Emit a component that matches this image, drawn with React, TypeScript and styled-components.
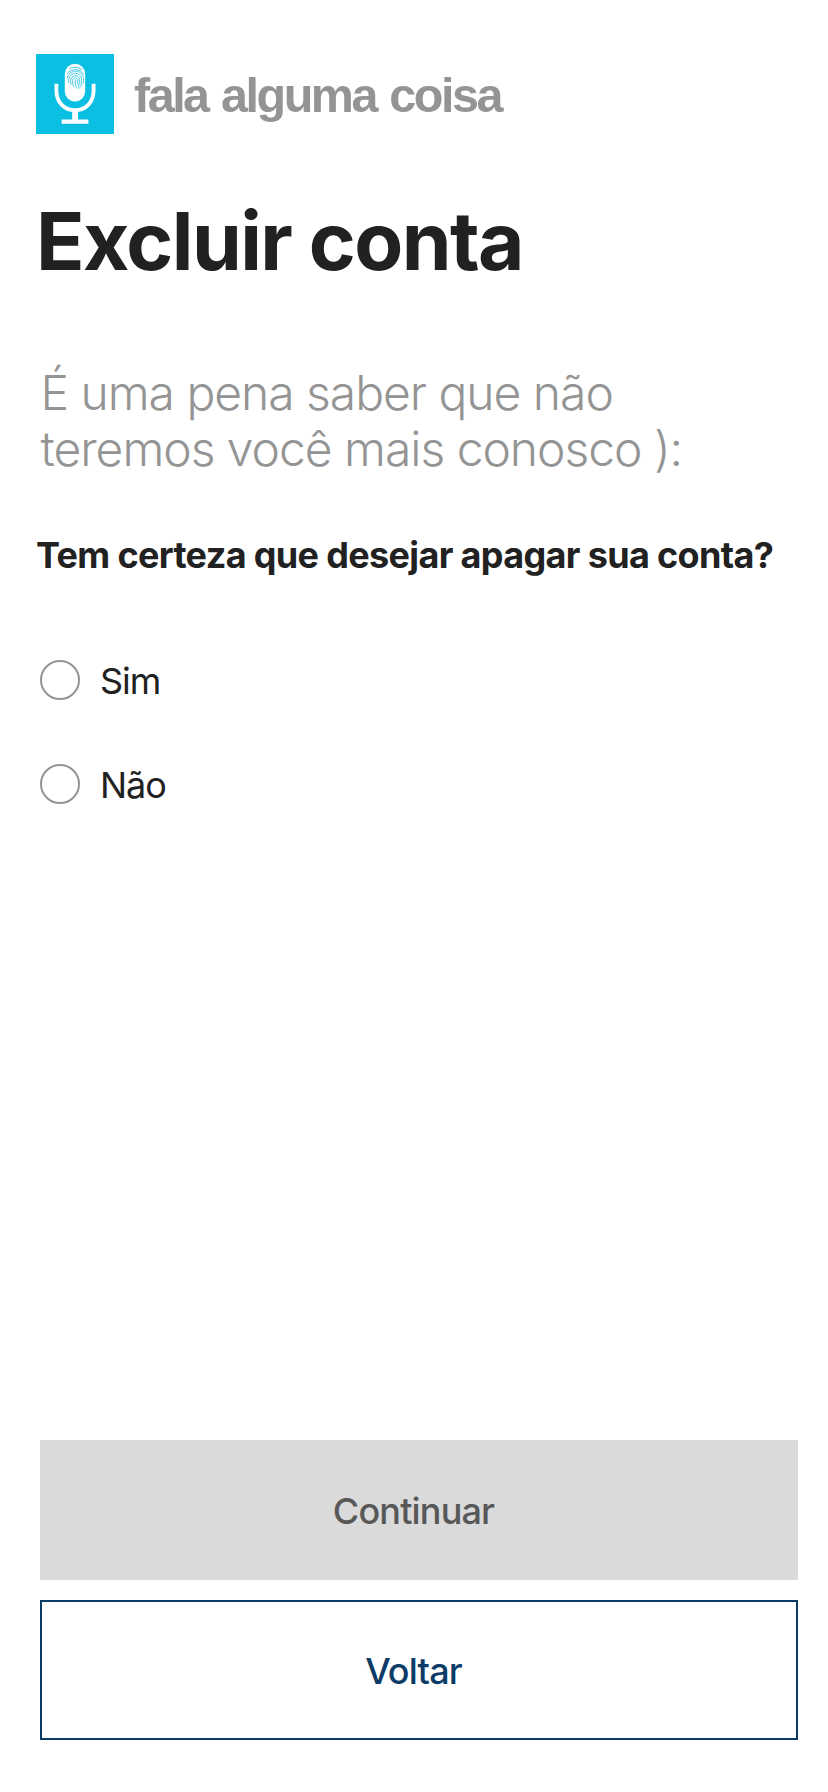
import React, { useState } from "react";
import styled, { createGlobalStyle } from "styled-components";

const GlobalStyle = createGlobalStyle`
  * { box-sizing: border-box; }
  body {
    margin: 0;
    background: #fff;
    color: #212121;
    font-family: Inter, sans-serif;
  }
`;

const Screen = styled.main`
  display: flex;
  flex-direction: column;
  width: 828px;
  height: 1792px;
  padding: 54px 30px 52px 36px;
`;

const Header = styled.header`
  display: flex;
  align-items: center;
  height: 80px;
  gap: 20px;
`;

const Logo = styled.svg`
  display: block;
  width: 78px;
  height: 80px;
  flex: none;
`;

const Brand = styled.span`
  padding-top: 2px;
  color: #949494;
  font-family: "Liberation Sans", Helvetica, sans-serif;
  font-size: 48.5px;
  font-weight: 700;
  line-height: 60px;
  letter-spacing: -0.0515em;
  word-spacing: 2.5px;
  white-space: nowrap;
`;

const Title = styled.h1`
  margin: 59px 0 0;
  font-size: 80px;
  font-weight: 700;
  line-height: 96px;
  letter-spacing: -0.0195em;
`;

const Message = styled.p`
  margin: 76px 0 0 4.5px;
  width: 660px;
  color: #949494;
  font-size: 48px;
  font-weight: 300;
  line-height: 56px;
  letter-spacing: -0.0215em;
`;

const Question = styled.h2`
  margin: 56px 0 0;
  font-size: 36px;
  font-weight: 700;
  line-height: 44px;
  letter-spacing: -0.0182em;
  white-space: nowrap;
`;

const Options = styled.div`
  display: flex;
  flex-direction: column;
  gap: 64px;
  margin: 83px 0 0 4px;
`;

const Option = styled.label`
  display: flex;
  align-items: center;
  gap: 20px;
  height: 40px;
`;

const OptionText = styled.span`
  padding-top: 2px;
  font-size: 36px;
  line-height: 42px;
  letter-spacing: -0.028em;
`;

const Radio = styled.input`
  appearance: none;
  width: 40px;
  height: 40px;
  margin: 0;
  border: 2px solid #949494;
  border-radius: 50%;
  background: #fff;

  &:checked {
    border: 12px solid #0b3b66;
  }
`;

const Actions = styled.div`
  display: flex;
  flex-direction: column;
  gap: 20px;
  margin: auto 0 0 4px;
`;

const Button = styled.button<{ $outlined?: boolean }>`
  height: 140px;
  padding: 2px 11px 0 0;
  border: ${(p) => (p.$outlined ? "2px solid #0b3b66" : "0")};
  background: ${(p) => (p.$outlined ? "#fff" : "#dadada")};
  color: ${(p) => (p.$outlined ? "#0b3b66" : "#575757")};
  font-family: inherit;
  font-size: 36px;
  font-weight: 500;
  line-height: 44px;
  letter-spacing: -0.023em;
`;

function MicLogo() {
  return (
    <Logo viewBox="0 0 78 80" aria-hidden="true">
      <rect width="78" height="80" fill="#0bbfe3" />
      <rect x="28.8" y="9.8" width="20.4" height="37.6" rx="10.2" fill="#fff" />
      <path d="M20.4 29.7V36.5C20.4 48.5 28.5 56.2 39 56.2S57.6 48.5 57.6 36.5V29.7" fill="none" stroke="#fff" strokeWidth="3.8" />
      <path d="M36.2 56h5.8v9.4h10.4v4.4H25.7v-4.4h10.5z" fill="#fff" />
      <g fill="none" stroke="#3fc8e6" strokeWidth="0.95" strokeLinecap="round">
        <path d="M33.4 14.7C37.2 12.5 43 12.7 46 15.7" />
        <path d="M31.2 19.6C35 14.4 44.3 13.7 47.8 20.3" />
        <path d="M31.1 24.2C32.2 16.2 44.4 14.3 47.2 22.7C47.9 24.9 47.6 27.4 47.5 28.6" />
        <path d="M32.7 28.6C31.9 27.3 32.7 24.9 33.3 23.5C35.8 17.5 44.3 18.1 45.4 24.2C45.8 26.6 45.2 30 46.1 31.2" />
        <path d="M35.2 30.7C33.8 28.4 34.4 26.6 35.2 24.6C37 20.3 43 21 43.5 25.3C43.8 28.5 43.5 31.4 44.8 33" />
        <path d="M37.9 32.7C36.1 29.7 35.6 27.2 37.2 25C38.7 22.8 41.6 23.8 41.7 26.3C41.8 30.1 42 32.4 43.4 34.2" />
        <path d="M39.7 25.7C38.7 29.2 39.2 32.1 41.3 34.5" />
      </g>
    </Logo>
  );
}

export default function App() {
  const [answer, setAnswer] = useState("");

  return (
    <>
      <GlobalStyle />
      <Screen>
        <Header>
          <MicLogo />
          <Brand>fala alguma coisa</Brand>
        </Header>
        <Title>Excluir conta</Title>
        <Message>
          É uma pena saber que não teremos você mais conosco ):
        </Message>
        <Question>Tem certeza que desejar apagar sua conta?</Question>
        <Options>
          {["Sim", "Não"].map((label) => (
            <Option key={label}>
              <Radio
                type="radio"
                name="confirm"
                checked={answer === label}
                onChange={() => setAnswer(label)}
              />
              <OptionText>{label}</OptionText>
            </Option>
          ))}
        </Options>
        <Actions>
          <Button type="button">Continuar</Button>
          <Button type="button" $outlined>
            Voltar
          </Button>
        </Actions>
      </Screen>
    </>
  );
}
